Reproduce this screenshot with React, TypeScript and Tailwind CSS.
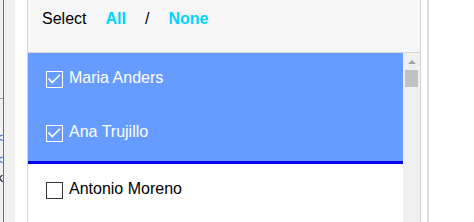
import React from 'react'

type Customer = { name: string; selected: boolean; focused?: boolean }

const customers: Customer[] = [
  { name: 'Maria Anders', selected: true },
  { name: 'Ana Trujillo', selected: true, focused: true },
  { name: 'Antonio Moreno', selected: false },
]

function CheckBox({ checked }: { checked: boolean }) {
  if (!checked) {
    return <span className="mt-[2px] h-[17px] w-[17px] shrink-0 border border-[#333333] bg-white" />
  }
  return (
    <span className="mt-[2px] flex h-[17px] w-[17px] shrink-0 items-center justify-center border border-white">
      <svg width="15" height="15" viewBox="0 0 15 15" fill="none">
        <path d="M1.5 6.5 L5.2 10.6 L13 2.8" stroke="white" strokeWidth="1.6" />
      </svg>
    </span>
  )
}

function CustomerRow({ customer }: { customer: Customer }) {
  const base = 'flex h-[54px] items-start pl-[18px] pt-[16px]'
  const tone = customer.selected ? 'bg-[#669cff] text-white' : 'bg-white text-black'
  const focus = customer.focused ? 'h-[57px] border-b-[3px] border-[#0000f5]' : ''
  return (
    <div className={`${base} ${tone} ${focus}`}>
      <CheckBox checked={customer.selected} />
      <span className="ml-[6px] text-[16px] leading-[18px] whitespace-nowrap">{customer.name}</span>
    </div>
  )
}

export default function App() {
  return (
    <div className="flex h-[222px] w-[474px] overflow-hidden bg-white font-['Liberation_Sans',Arial,sans-serif]">
      {/* page behind the popup, mostly cut off */}
      <div className="flex w-[3px] flex-col items-end overflow-hidden bg-[#f0f0f0]">
        <div className="h-[98px] shrink-0" />
        <div className="h-px w-full shrink-0 bg-[#9c9c9c]" />
        <span className="mt-[28px] text-[13px] leading-[22px] whitespace-nowrap text-[#3355ff]">&lt;</span>
        <span className="text-[13px] leading-[22px] whitespace-nowrap text-[#3355ff]">&lt;</span>
        <span className="text-[13px] leading-[14px] whitespace-nowrap text-black">k</span>
      </div>
      <div className="w-px bg-[#6e63a0]" />
      <div className="w-[11px] bg-[#f0f0f0]" />
      <div className="w-[12px] bg-white" />

      <div className="flex w-[394px] shrink-0 flex-col border-x border-[#d4d4d4]">
        <div className="flex h-[53px] shrink-0 items-start gap-[19px] border-b border-[#d4d4d4] bg-[#f6f6f6] pl-[14px] pt-[10px] text-[16px] leading-[18px]">
          <span className="text-black">Select</span>
          <span className="font-bold text-[#00d4f7]">All</span>
          <span className="text-black">/</span>
          <span className="font-bold text-[#00d4f7]">None</span>
        </div>
        <div className="flex flex-1">
          <div className="flex-1">
            {customers.map((c) => (
              <CustomerRow key={c.name} customer={c} />
            ))}
          </div>
          <div className="flex w-[17px] flex-col items-center bg-[#f0f0f0]">
            <span className="mt-[7px] h-0 w-0 border-x-[4px] border-b-[4px] border-x-transparent border-b-[#a3a3a3]" />
            <span className="mt-[6px] h-[17px] w-[13px] bg-[#c1c1c1]" />
          </div>
        </div>
      </div>

      <div className="w-[6px] bg-white" />
      <div className="w-[2px] bg-[#dcdcdc]" />
    </div>
  )
}
